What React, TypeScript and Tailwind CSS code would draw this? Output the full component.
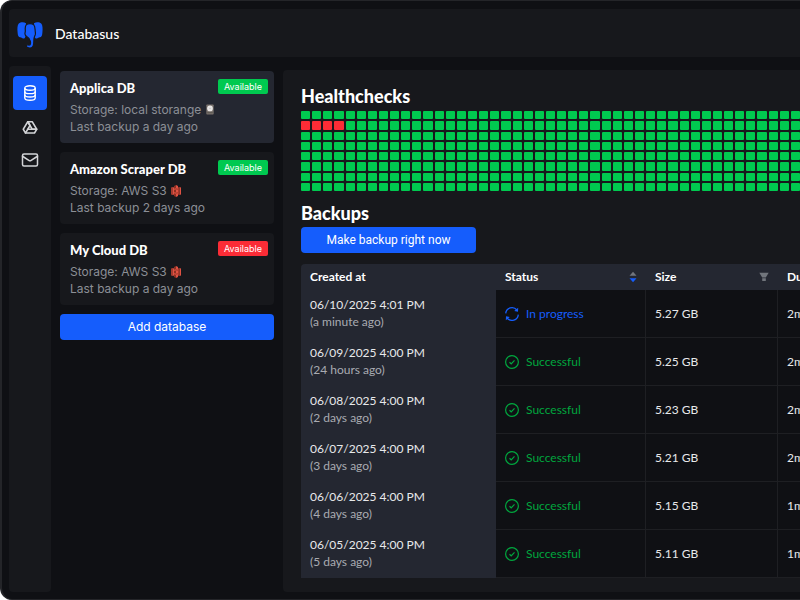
import type { ReactNode } from 'react'
import { LuMail } from 'react-icons/lu'
import { TbBrandGoogleDrive } from 'react-icons/tb'

const databases = [
  { name: 'Applica DB', storage: 'local storange', kind: 'local', backup: 'a day ago', ok: true },
  { name: 'Amazon Scraper DB', storage: 'AWS S3', kind: 's3', backup: '2 days ago', ok: true },
  { name: 'My Cloud DB', storage: 'AWS S3', kind: 's3', backup: 'a day ago', ok: false },
]

const backups = [
  { date: '06/10/2025 4:01 PM', ago: 'a minute ago', done: false, size: '5.27 GB', duration: '2m' },
  { date: '06/09/2025 4:00 PM', ago: '24 hours ago', done: true, size: '5.25 GB', duration: '2m' },
  { date: '06/08/2025 4:00 PM', ago: '2 days ago', done: true, size: '5.23 GB', duration: '2m' },
  { date: '06/07/2025 4:00 PM', ago: '3 days ago', done: true, size: '5.21 GB', duration: '2m' },
  { date: '06/06/2025 4:00 PM', ago: '4 days ago', done: true, size: '5.15 GB', duration: '1m' },
  { date: '06/05/2025 4:00 PM', ago: '5 days ago', done: true, size: '5.11 GB', duration: '1m' },
]

const COLUMNS = 45
const ROWS = 8

// Elephant head: two ears, then the head and trunk outlined in the header colour
const Logo = () => (
  <svg viewBox="0 -3 26 30" className="h-[30px] w-[26px]" fill="#155dfc" aria-hidden="true">
    <path d="M9 2.200C7 .9 3.500.9 1.800 2.600.3 4.200.2 8 .6 11.500c.2 2.500.6 3.800 1.500 4.500 1.300.6 2.700.6 3.900 1.400.8.500 1.800.1 2-.9L10 12Z" />
    <path d="M17 2.200c2-1.300 5.500-1.300 7.200.4 1.500 1.600 1.600 5.400 1.200 8.900-.2 2.500-.6 3.800-1.500 4.500-1.300.6-2.700.6-3.900 1.400-.8.500-1.800.1-2-.9L16 12Z" />
    <path
      d="M9.200 3.800c1.800-1.600 5.800-1.600 7.600 0 1.300 1.300 1.200 4 1.400 6.300.2 1.500.5 2.500 0 3.800-.5 1.200-1 2.100-1.200 3.600-.4 2.700.2 5.700-1 7.700-.9 1.500-2.700 2-4.300 1.700-1.700-.3-2.800-1.500-2.200-2.600.6-.9 1.600-.2 2.500-.2 1.500 0 1.700-1.700 1.400-3.700-.3-2.200-1.300-3.600-3.400-4.700-1.500-.8-2.300-1.900-2-3.500.2-1.200.4-1.700.3-3C8.200 7.400 7.900 5.200 9.200 3.800Z"
      stroke="#17181c"
      strokeWidth="1.200"
    />
  </svg>
)

const DatabaseIcon = () => (
  <svg viewBox="0 0 14 16" className="h-4 w-[14px]" fill="none" stroke="currentColor" strokeWidth="1.400" aria-hidden="true">
    <ellipse cx="7" cy="3" rx="5.200" ry="2.200" />
    <path d="M1.800 3v10c0 1.200 2.300 2.200 5.200 2.200s5.200-1 5.200-2.200V3" />
    <path d="M1.800 6.400c0 1.200 2.300 2.200 5.200 2.200s5.200-1 5.200-2.200M1.800 9.800C1.800 11 4.100 12 7 12s5.200-1 5.200-2.200" />
  </svg>
)

const LocalIcon = () => (
  <svg viewBox="0 0 10 12" className="h-[11px] w-[10px]" aria-hidden="true">
    <rect x="1" y="0.500" width="8" height="11" rx="0.800" fill="#78716c" />
    <circle cx="5" cy="4.800" r="3.100" fill="#e7e5e4" />
    <circle cx="5" cy="4.800" r="0.800" fill="#c4c0bd" />
    <path d="M2 9.500h6" stroke="#57534e" />
  </svg>
)

const S3Icon = () => (
  <svg viewBox="0 0 10 12" className="h-3 w-[10px]" aria-hidden="true">
    <path d="M0 2.500 1.500 2v8L0 9.500Z" fill="#a83a2b" />
    <path d="M10 2.500 8.500 2v8l1.500-.5Z" fill="#e05243" />
    <path d="M1.500 2 5 3v6l-3.500 1Z" fill="#e05243" />
    <path d="M8.500 2 5 3v6l3.500 1Z" fill="#a83a2b" />
    <path d="M5 0 3 1v2.800l2-.6ZM5 12l-2-1V8.200l2 .6ZM3 4.800l2-.3v3l-2-.3Z" fill="#8c3123" />
    <path d="m5 0 2 1v2.800l-2-.6ZM5 12l2-1V8.200l-2 .6ZM7 4.800l-2-.3v3l2-.3Z" fill="#e05243" />
  </svg>
)

const SyncIcon = () => (
  <svg viewBox="0 0 16 16" className="h-4 w-4 shrink-0" fill="none" stroke="currentColor" strokeWidth="1.300" aria-hidden="true">
    <path d="M1.700 7.400A6.300 6.300 0 0 1 12.900 4M14.300 8.600A6.300 6.300 0 0 1 3.100 12" />
    <path d="m14.200 1.800-.2 3.900-3.800-.8ZM1.800 14.200l.2-3.900 3.800.8Z" fill="currentColor" stroke="none" />
  </svg>
)

const CheckIcon = () => (
  <svg viewBox="0 0 16 16" className="h-4 w-4 shrink-0" fill="none" stroke="currentColor" strokeWidth="1.200" aria-hidden="true">
    <circle cx="8" cy="8" r="6.400" />
    <path d="m5.500 8.200 1.700 1.600 3.300-3.400" />
  </svg>
)

const SortIcon = () => (
  <svg viewBox="0 0 8 12" className="h-3 w-2" aria-hidden="true">
    <path d="m4 .8 3.500 4h-7Z" fill="#71757c" />
    <path d="M4 11.200.5 7.200h7Z" fill="#155dfc" />
  </svg>
)

const FilterIcon = () => (
  <svg viewBox="0 0 10 10" className="h-[10px] w-[10px]" fill="#71757c" aria-hidden="true">
    <path d="M.300.800h9.400L6.800 5.500H3.200ZM3.200 6.300h3.600V9H3.200Z" />
  </svg>
)

const NavButton = ({ label, active, children }: { label: string; active?: boolean; children: ReactNode }) => (
  <button
    aria-label={label}
    className={
      active
        ? 'flex h-[34px] w-[34px] items-center justify-center rounded bg-[#155dfc] text-white'
        : 'flex h-[33px] w-[34px] items-center justify-center rounded text-[#d4d5d8]'
    }
  >
    {children}
  </button>
)

const DatabaseCard = ({ db, selected }: { db: (typeof databases)[number]; selected: boolean }) => (
  <article className={selected ? 'rounded bg-[#242731] px-[10px] py-2' : 'rounded bg-[#17181c] px-[10px] py-2'}>
    <div className="mb-1 flex items-start justify-between">
      <h3 className="font-['Lato'] text-[13px] leading-[18px] font-black text-white">{db.name}</h3>
      <span
        className={
          db.ok
            ? '-mr-1 rounded-xs bg-[#00c950] px-[6px] text-[9px] leading-[15px] text-white'
            : '-mr-1 rounded-xs bg-[#fb2c36] px-[6px] text-[9px] leading-[15px] text-white'
        }
      >
        Available
      </span>
    </div>
    <p className="flex items-center gap-1 text-[12px] leading-[17px] text-[#8c8f96]">
      Storage: {db.storage} {db.kind === 's3' ? <S3Icon /> : <LocalIcon />}
    </p>
    <p className="text-[12px] leading-[17px] text-[#8c8f96]">Last backup {db.backup}</p>
  </article>
)

const Healthchecks = () => (
  <div className="grid h-20 grid-cols-[repeat(45,minmax(0,1fr))] grid-rows-8 gap-[2px]">
    {[...Array(COLUMNS * ROWS)].map((_, i) => {
      const failed = i >= COLUMNS && i < COLUMNS + 4
      return <span key={i} className={failed ? 'rounded-[1px] bg-[#fb2c36]' : 'rounded-[1px] bg-[#00c950]'} />
    })}
  </div>
)

const BackupsTable = () => (
  <table className="w-[600px] table-fixed border-separate border-spacing-0 overflow-hidden rounded-t text-left font-['Lato'] text-[12px] text-[#e8e9eb]">
    <thead>
      <tr className="h-[26px] bg-[#242731] text-white">
        <th className="w-[195px] px-[9px] font-bold">Created at</th>
        <th className="w-[150px] px-[9px] font-bold">
          <div className="flex items-center justify-between">Status <SortIcon /></div>
        </th>
        <th className="w-[132px] px-[9px] font-bold">
          <div className="flex items-center justify-between">Size <FilterIcon /></div>
        </th>
        <th className="px-[9px] font-bold">Duration</th>
      </tr>
    </thead>
    <tbody>
      {backups.map((b) => (
        <tr key={b.date} className="h-12 bg-[#0f1014]">
          <td className="bg-[#242731] px-[9px] pb-[2px] leading-[17px]">
            <p>{b.date}</p>
            <p className="text-[#a9abb1]">({b.ago})</p>
          </td>
          <td className="border-r border-b border-[#1e1f23] px-2">
            <div className={b.done ? 'flex items-center gap-[6px] text-[#00a63e]' : 'flex items-center gap-[6px] text-[#155dfc]'}>
              {b.done ? <CheckIcon /> : <SyncIcon />}
              {b.done ? 'Successful' : 'In progress'}
            </div>
          </td>
          <td className="border-r border-b border-[#1e1f23] px-[9px]">{b.size}</td>
          <td className="border-b border-[#1e1f23] px-[9px]">{b.duration}</td>
        </tr>
      ))}
    </tbody>
  </table>
)

export default function App() {
  return (
    <div className="bg-white font-['Inter',sans-serif]">
      <div className="flex min-h-screen flex-col gap-[9px] overflow-hidden rounded-l-xl border-y border-l-2 border-[#242529] bg-[#0f1014] pt-2 pb-[7px] pl-[7px]">
        <header className="flex h-12 shrink-0 items-center gap-3 rounded-l bg-[#17181c] pl-2">
          <Logo />
          <h1 className="font-['Lato'] text-[14px] font-medium text-white">Databasus</h1>
        </header>
        <div className="flex flex-1 gap-[9px]">
          <nav className="flex w-[42px] shrink-0 flex-col items-center rounded bg-[#17181c] pt-[10px]">
            <NavButton label="Databases" active><DatabaseIcon /></NavButton>
            <NavButton label="Storages"><TbBrandGoogleDrive size={18} /></NavButton>
            <NavButton label="Notifiers"><LuMail size={18} /></NavButton>
          </nav>
          <aside className="flex w-[214px] shrink-0 flex-col gap-[9px] pt-[5px]">
            {databases.map((db, i) => (
              <DatabaseCard key={db.name} db={db} selected={i === 0} />
            ))}
            <button className="h-[26px] rounded bg-[#155dfc] text-[12px] text-white">Add database</button>
          </aside>
          <main className="mt-1 min-w-0 flex-1 overflow-hidden rounded-l bg-[#17181c] pt-4 pl-[18px]">
            <h2 className="mb-[5px] font-['Lato'] text-[18px] leading-5 font-black text-white">Healthchecks</h2>
            <Healthchecks />
            <h2 className="mt-3 mb-[3px] font-['Lato'] text-[18px] leading-5 font-black text-white">Backups</h2>
            <button className="mb-[11px] h-[26px] w-[175px] rounded bg-[#155dfc] font-['Roboto'] text-[12px] text-white">Make backup right now</button>
            <BackupsTable />
          </main>
        </div>
      </div>
    </div>
  )
}
